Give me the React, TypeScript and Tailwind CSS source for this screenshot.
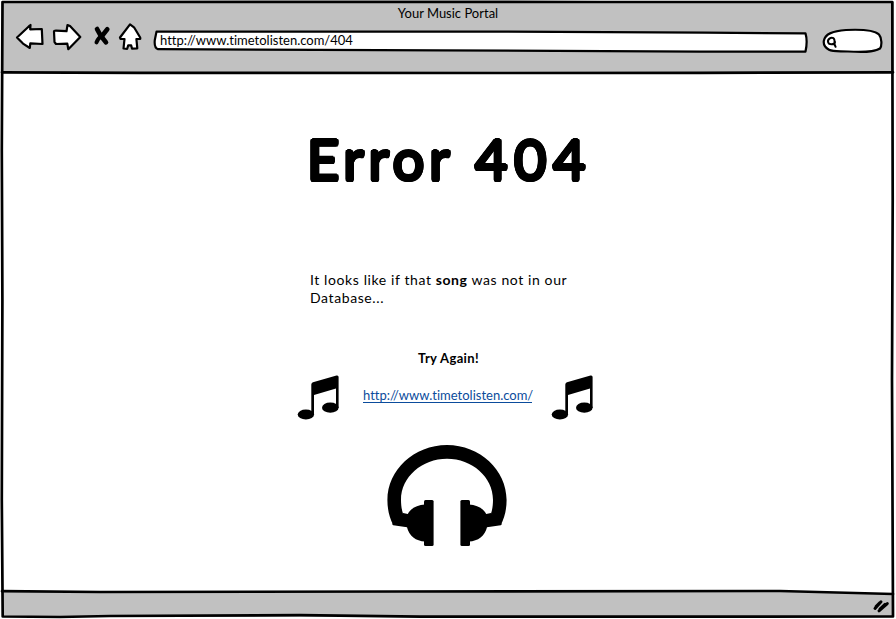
import type { ReactNode } from "react";

const ink = { fill: "none", stroke: "#000", strokeLinecap: "round", strokeLinejoin: "round" } as const;

function Back() {
  return (
    <svg className="block h-[28px] w-[30px]" viewBox="15 23 30 28">
      <path {...ink} fill="#fff" strokeWidth="2.2" d="M17 37.5 L29 26.2 L30.5 25 L30.2 29.3 L41.8 29 L42.5 44 L30.3 43.3 L29.8 48 L23 43.6 Z" />
    </svg>
  );
}

function Forward() {
  return (
    <svg className="ml-[7px] block h-[28px] w-[31px]" viewBox="52 23 31 28">
      <path {...ink} fill="#fff" strokeWidth="2.2" d="M54 31.5 Q54 30.6 56 30.6 L66.5 31.2 L67.5 25 L70 26 L80.3 37 L68.3 49.2 L67.3 43.6 L56 44 L54.5 42 Z" />
    </svg>
  );
}

function Stop() {
  return (
    <svg className="ml-[9px] block h-[28px] w-[20px]" viewBox="92 23 20 28">
      <path {...ink} strokeWidth="4.6" d="M97 29 Q100 36 106 42.3 M107.3 29.3 L102 36" />
      <path {...ink} strokeWidth="4" d="M103 35 Q98 38 96.5 42.4" />
    </svg>
  );
}

function Home() {
  return (
    <svg className="ml-[5px] block h-[28px] w-[26px]" viewBox="117 23 26 28">
      <path {...ink} fill="#fff" strokeWidth="2.2" d="M130 24.3 L120 37.5 L120.5 38.8 L124.5 39 L123.5 48.5 L127.2 48.8 L128.2 45.4 L131.2 45.4 L132 48.6 L137.3 48.3 L136.4 39 L140.3 38.8 L140.2 37.5 L134 27.3 Z" />
    </svg>
  );
}

function AddressBar() {
  return (
    <div className="relative ml-[9px] mt-[6px] h-[24px] w-[657px]">
      <svg className="absolute inset-0 h-[24px] w-[657px]" viewBox="152 29 657 24">
        <path {...ink} fill="#fff" strokeWidth="2.2" d="M156.5 31.6 L500 31.6 L705 32.6 L805.5 33.4 Q807.8 41 805.5 51.6 L700 51.6 L440 50.4 L158 49.2 Q154 48 154.8 40 Z" />
      </svg>
      <span className="relative block whitespace-pre pl-[8px] text-[13px] leading-[22px]">
        http://www.timetolisten.com/404
      </span>
    </div>
  );
}

function Search() {
  return (
    <svg className="ml-[12px] mt-[5px] block h-[26px] w-[63px]" viewBox="821 28 63 26">
      <path {...ink} fill="#fff" strokeWidth="2.2" d="M823.8 41 C825 34 832 31 846 30 C860 29.3 874 30 879 34.5 C882 38 882 46 880 48.5 C873 52.5 862 52.3 848 51.5 C840 51 833 52 829 49.8 C825 47.5 823.4 44 823.8 41 Z" />
      <path {...ink} strokeWidth="2" d="M835 42 C834.6 45 829 45 828.2 42.5 C827 39 831 37 833.5 38.2 C835 39.3 834.6 42 834.6 44.5 L835.6 46.8" />
    </svg>
  );
}

function Note() {
  return (
    <svg className="block h-[46px] w-[43px]" viewBox="297 375 43 46">
      <path d="M311.3 384.4 Q311.5 382.7 313 382.2 L336.5 375.5 Q338.6 375.1 338.6 377 V408 H336 V388.6 L314 395 V414.5 H311.3 Z" />
      <ellipse cx="305.9" cy="414.5" rx="8.2" ry="5.1" />
      <ellipse cx="330.3" cy="407.7" rx="8.3" ry="5.1" />
    </svg>
  );
}

function Cup() {
  return (
    <>
      <path d="M425 504.5 C417 505 410.5 508.5 407.8 514 L403 513 L392 524 L393.3 525.2 L407 527.3 C409 536 416 541.2 425 541.6 Z" />
      <rect x="424" y="500" width="9.6" height="46" rx="1.5" />
    </>
  );
}

function Headphones() {
  return (
    <svg className="block h-[104px] w-[122px]" viewBox="386 444 122 104">
      <path d="M393.3 525.2 C389.2 517 387.4 509 387.4 500 C387.4 470 414 445 447 445 C480 445 506.6 470 506.6 500 C506.6 509 504.8 517 500.7 525.2 L491 513.5 C492.3 510 493 505 493 500 C493 477 472 458.8 447 458.8 C422 458.8 401 477 401 500 C401 505 401.7 510 403 513.5 Z" />
      <Cup />
      <g transform="translate(894 0) scale(-1 1)">
        <Cup />
      </g>
    </svg>
  );
}

function Grip() {
  return (
    <svg className="block h-[14px] w-[20px]" viewBox="871 599 20 14">
      <path {...ink} strokeWidth="3" d="M875 608.4 L881 601.8 M879 610.8 L887.3 603.6 M876 606.5 L880 602.5 M880 609 L885 604.3" />
    </svg>
  );
}

function Outline() {
  return (
    <svg className="pointer-events-none absolute inset-0 h-[619px] w-[896px]" viewBox="0 0 896 619">
      <path fill="#fff" d="M640 588 H894 V594 L780 591 L640 591 Z" />
      <path {...ink} strokeWidth="2.7" d="M2.5 2 L300 1.8 L600 2 L892.3 2 L892.7 200 L892 380 L893 616.5 L700 616.7 L420 616.6 L300 615.2 L110 616 L60 617 L2.7 616.5 L1.8 500 L2.4 300 L1.8 150 Z" />
      <path {...ink} strokeWidth="2.7" d="M2 72.3 L140 72.8 L500 73 L700 72.8 L893 72.3" />
      <path {...ink} strokeWidth="2.7" d="M2 591.2 L100 592 L400 591.5 L780 591 L893 594" />
    </svg>
  );
}

function Word({ children }: { children: ReactNode }) {
  return <strong className="font-bold">{children}</strong>;
}

export default function App() {
  return (
    <div className="relative flex h-[619px] w-[896px] flex-col overflow-hidden bg-white font-['Lato','Open_Sans',sans-serif] text-black [font-variant-ligatures:none]">
      <header className="mx-[2px] mt-[2px] h-[71px] shrink-0 bg-[#c1c1c1]">
        <h2 className="h-[21px] text-center text-[13px] leading-[22px]">Your Music Portal</h2>
        <nav className="flex items-start pl-[13px]">
          <Back />
          <Forward />
          <Stop />
          <Home />
          <AddressBar />
          <Search />
        </nav>
      </header>
      <main className="flex min-h-0 flex-1 flex-col items-center pr-[2px]">
        <h1 className="mt-[49px] flex h-[74px] w-[280px] whitespace-pre text-[56px] font-normal leading-[74px] [text-shadow:1.7px_0_#000,1.5px_0.9px_#000,0.9px_1.5px_#000,0_1.7px_#000,-0.9px_1.5px_#000,-1.5px_0.9px_#000,-1.7px_0_#000,-1.5px_-0.9px_#000,-0.9px_-1.5px_#000,0_-1.7px_#000,0.9px_-1.5px_#000,1.5px_-0.9px_#000]">
          <span className="w-[168px] shrink-0 tracking-[4.8px]">Error</span>
          <span className="shrink-0 tracking-[6.5px]">404</span>
        </h1>
        <p className="mt-[75px] w-[276px] whitespace-pre pl-[1px] text-[14px] leading-[18px] tracking-[0.6px]">
          It looks like if that <Word>song</Word> was not in our{"\n"}Database...
        </p>
        <p className="mt-[42px] pl-[3px] text-[13px] font-bold leading-[18px] tracking-[0.35px]">Try Again!</p>
        <div className="mt-[8px] flex items-start pr-[3px]">
          <Note />
          <a className="ml-[23px] mr-[19px] mt-[13px] block h-[15px] w-[169px] whitespace-nowrap border-b border-[#0b4c9c] text-[13px] leading-[14px] text-[#0b4c9c]">
            http://www.timetolisten.com/
          </a>
          <Note />
        </div>
        <div className="mt-[23px]">
          <Headphones />
        </div>
      </main>
      <footer className="mx-[2px] mb-[2px] flex h-[26px] shrink-0 justify-end bg-[#c1c1c1] pr-[3px] pt-[8px]">
        <Grip />
      </footer>
      <Outline />
    </div>
  );
}
